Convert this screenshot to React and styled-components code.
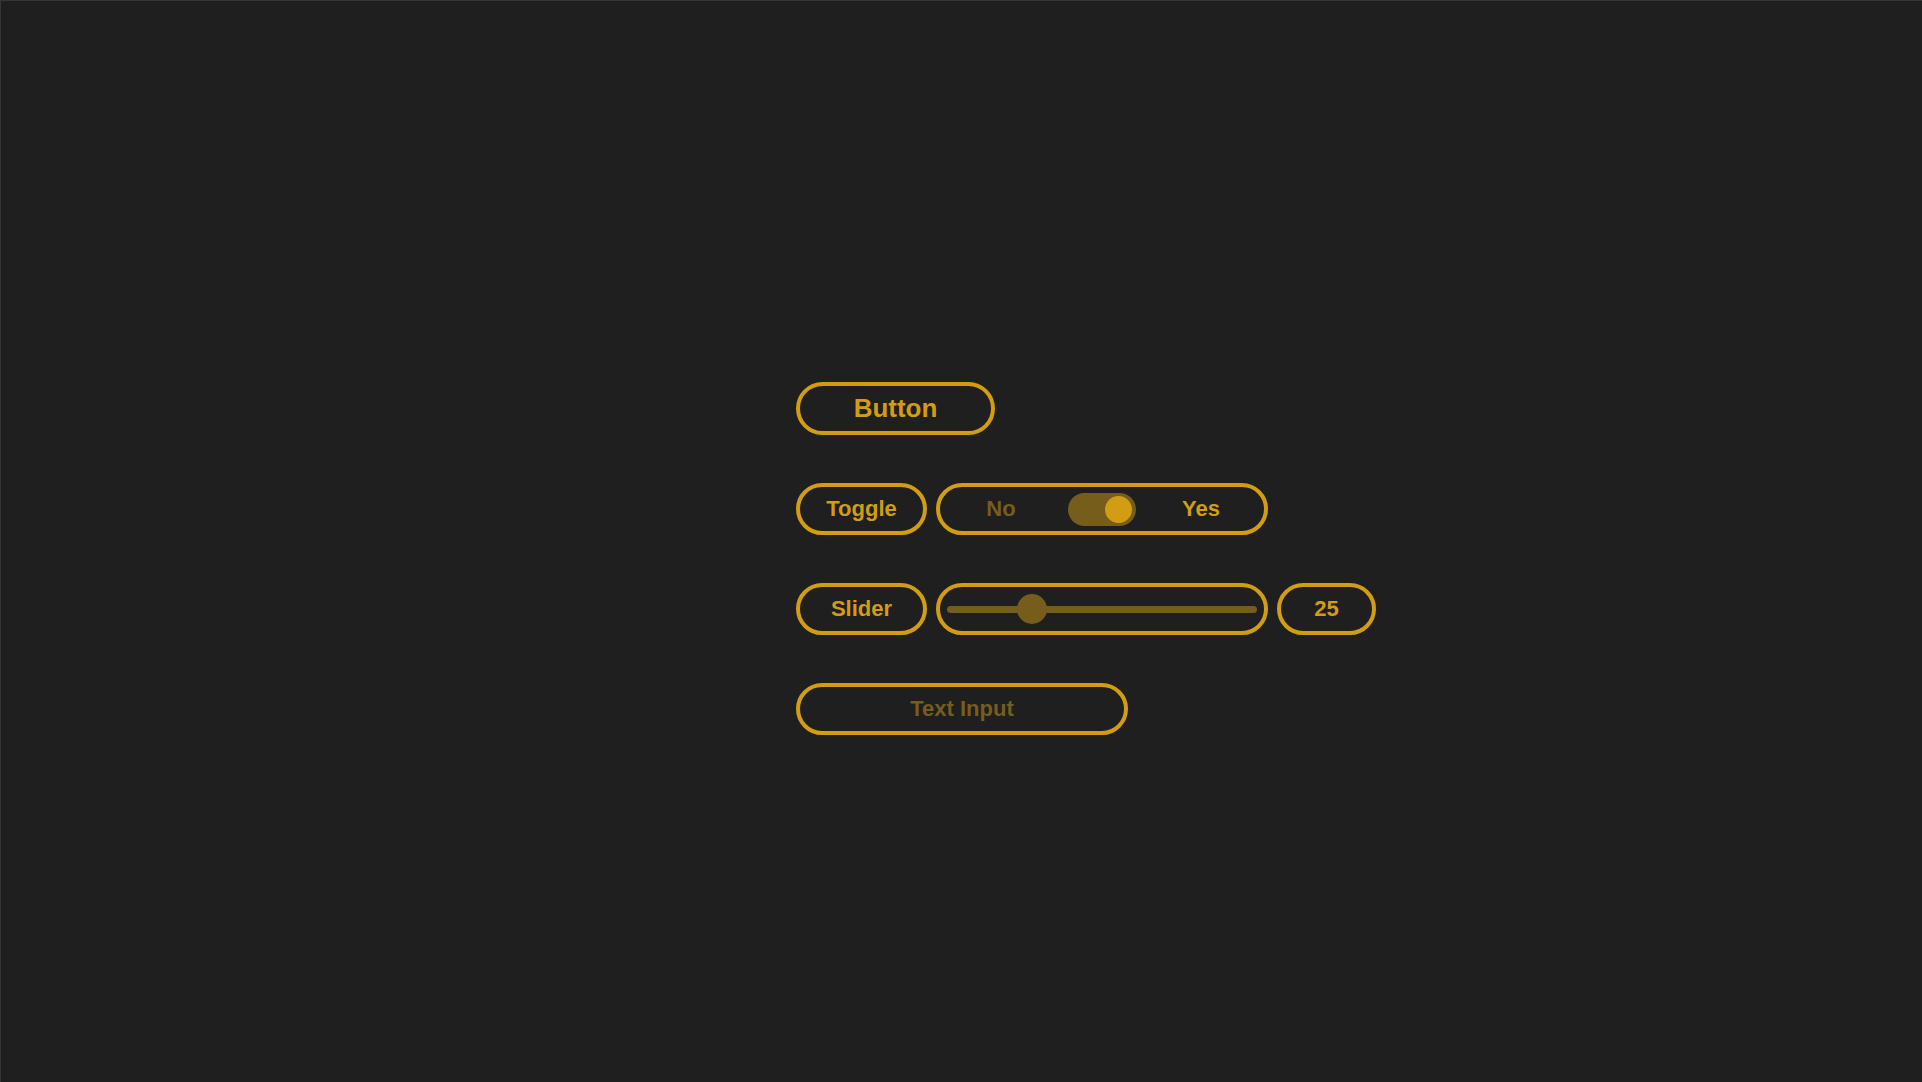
import React, { useState } from 'react';
import styled, { createGlobalStyle } from 'styled-components';

const gold = '#d29d13';
const dim = '#765d1c';

const GlobalStyle = createGlobalStyle`
  html, body {
    margin: 0;
    padding: 0;
    background: #1f1f1f;
  }
  * {
    box-sizing: border-box;
  }
`;

const Page = styled.div`
  min-height: 100vh;
  border-top: 1px solid #363636;
  border-left: 1px solid #363636;
  padding: 381px 0 0 795px;
  font-family: 'Liberation Sans', Arial, sans-serif;
  font-weight: 700;
`;

const Panel = styled.div`
  display: flex;
  flex-direction: column;
  align-items: flex-start;
  gap: 48px;
`;

const Row = styled.div`
  display: flex;
  align-items: center;
  gap: 9px;
`;

const Pill = styled.div`
  height: 52px;
  width: ${({ w }) => w}px;
  border: 4px solid ${gold};
  border-radius: 999px;
  display: flex;
  align-items: center;
  justify-content: center;
  color: ${gold};
  font-size: 22px;
  background: transparent;
`;

const Button = styled.button`
  height: 53px;
  width: 199px;
  border: 4px solid ${gold};
  border-radius: 999px;
  background: transparent;
  color: ${gold};
  font-family: inherit;
  font-weight: 700;
  font-size: 26px;
  padding: 0;
  cursor: pointer;
`;

const ToggleGroup = styled(Pill)`
  display: grid;
  grid-template-columns: 1fr auto 1fr;
  justify-items: center;
`;

const Option = styled.span`
  color: ${({ active }) => (active ? gold : dim)};
  margin: ${({ side }) => (side === 'left' ? '0 6px 0 0' : '0 0 0 2px')};
`;

const Track = styled.div`
  width: 68px;
  height: 33px;
  border-radius: 999px;
  background: ${dim};
  display: flex;
  align-items: center;
  justify-content: ${({ on }) => (on ? 'flex-end' : 'flex-start')};
  padding: 0 4px;
  cursor: pointer;
`;

const Knob = styled.div`
  width: 27px;
  height: 27px;
  border-radius: 50%;
  background: ${gold};
`;

const SliderBox = styled(Pill)`
  padding: 0 7px;
`;

const Range = styled.input`
  -webkit-appearance: none;
  appearance: none;
  width: 100%;
  height: 30px;
  margin: 0;
  background: transparent;
  &::-webkit-slider-runnable-track {
    height: 7px;
    border-radius: 4px;
    background: ${dim};
  }
  &::-webkit-slider-thumb {
    -webkit-appearance: none;
    width: 30px;
    height: 30px;
    border-radius: 50%;
    background: ${dim};
    margin-top: -11.5px;
    border: none;
  }
  &:focus {
    outline: none;
  }
`;

const TextField = styled.input`
  height: 52px;
  width: 332px;
  border: 4px solid ${gold};
  border-radius: 999px;
  background: transparent;
  color: ${gold};
  font-family: inherit;
  font-weight: 700;
  font-size: 22px;
  text-align: center;
  outline: none;
  &::placeholder {
    color: ${dim};
  }
`;

export default function App() {
  const [on, setOn] = useState(true);
  const [value, setValue] = useState(25);
  return (
    <Page>
      <GlobalStyle />
      <Panel>
        <Button>Button</Button>
        <Row>
          <Pill w={131}>Toggle</Pill>
          <ToggleGroup w={332}>
            <Option side="left" active={!on}>No</Option>
            <Track on={on} onClick={() => setOn(!on)}>
              <Knob />
            </Track>
            <Option side="right" active={on}>Yes</Option>
          </ToggleGroup>
        </Row>
        <Row>
          <Pill w={131}>Slider</Pill>
          <SliderBox w={332}>
            <Range
              type="range"
              min={0}
              max={100}
              value={value}
              onChange={(e) => setValue(Number(e.target.value))}
            />
          </SliderBox>
          <Pill w={99}>{value}</Pill>
        </Row>
        <TextField placeholder="Text Input" />
      </Panel>
    </Page>
  );
}
